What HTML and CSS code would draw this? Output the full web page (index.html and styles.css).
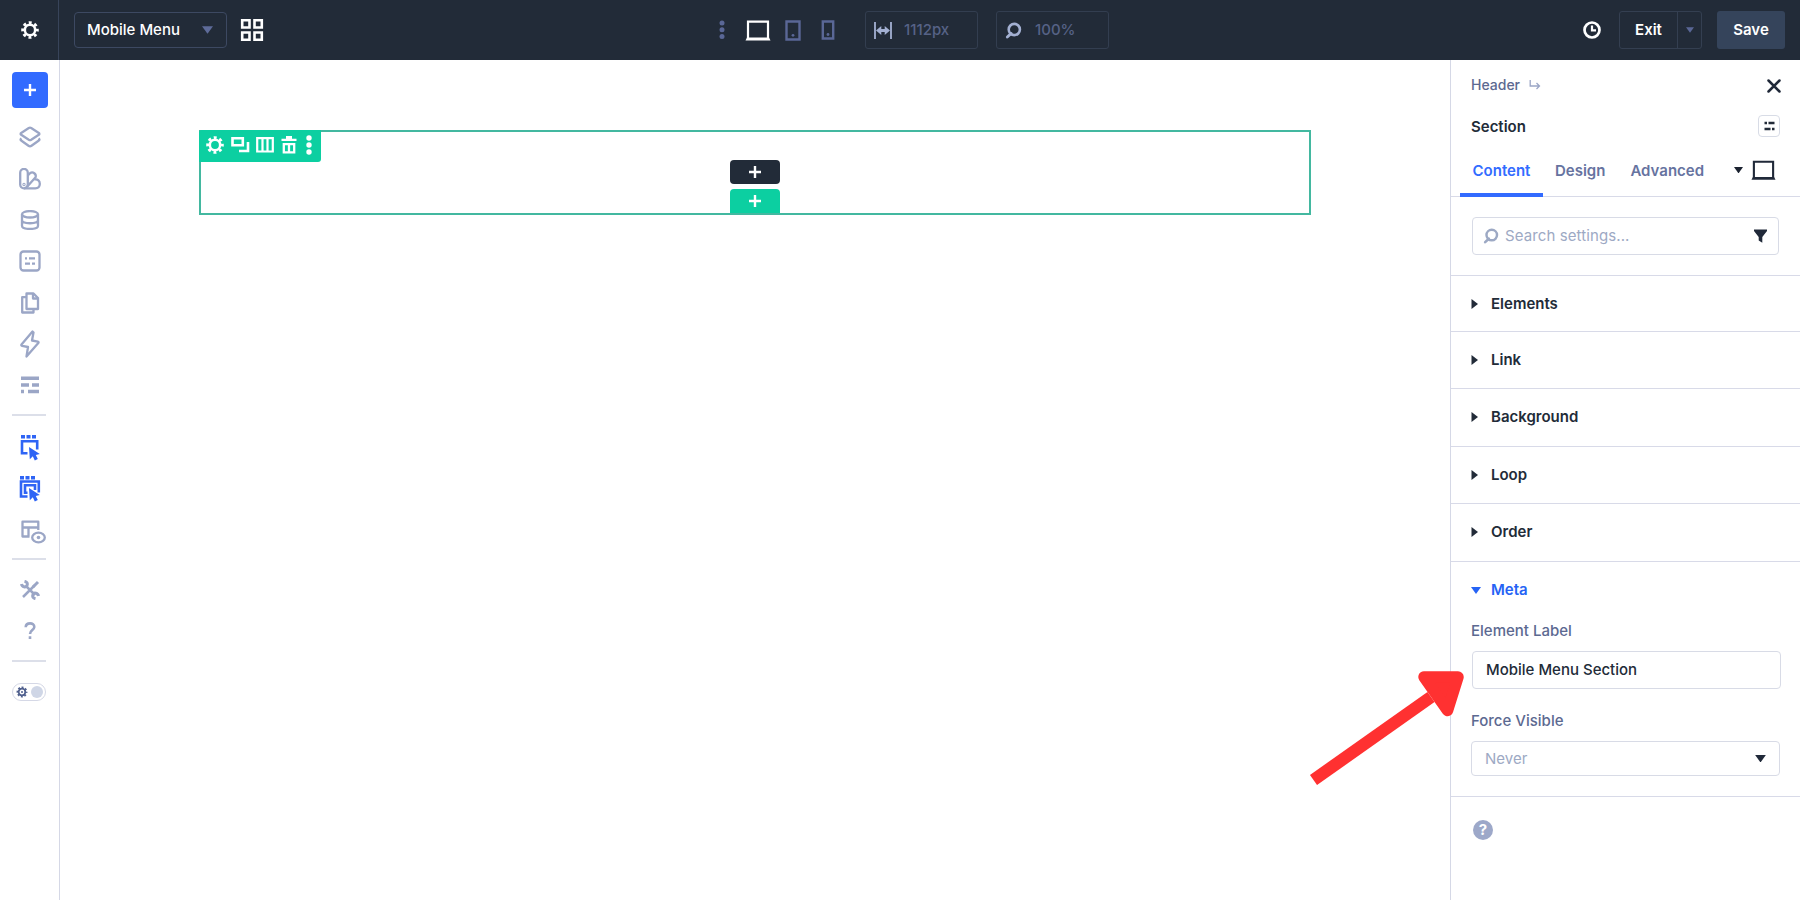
FILE: index.html
```html
<!DOCTYPE html>
<html lang="en">
<head>
<meta charset="utf-8">
<title>Mobile Menu</title>
<link rel="stylesheet" href="styles.css">
</head>
<body>
<svg class="defs" width="0" height="0">
  <symbol id="gear" viewBox="0 0 18 18"><circle cx="9" cy="9" r="5.200" fill="none" stroke="currentColor" stroke-width="2.600"/><circle cx="9" cy="9" r="7.300" fill="none" stroke="currentColor" stroke-width="3" stroke-dasharray="2.900 2.833" stroke-dashoffset="1.450"/></symbol>
  <symbol id="plus" viewBox="0 0 14 14"><path d="M7 1v12M1 7h12" fill="none" stroke="currentColor" stroke-width="2.400"/></symbol>
  <symbol id="laptop" viewBox="0 0 26 21"><path d="M3 18.500V1.700h20v16.800" fill="none" stroke="currentColor" stroke-width="2.200"/><path d="M2 17.500h22l1.500 3H.5z" fill="currentColor"/></symbol>
  <symbol id="lens" viewBox="0 0 17 17"><circle cx="9.300" cy="7.500" r="5.600" fill="none" stroke="currentColor" stroke-width="2.600"/><path d="M6.200 11.400 2.300 15" stroke="currentColor" stroke-width="2.800" stroke-linecap="round"/></symbol>
  <symbol id="down" viewBox="0 0 10 7"><path d="M0 0h10L5 7z" fill="currentColor"/></symbol>
  <symbol id="right" viewBox="0 0 7 10"><path d="M.5 0 7 5 .5 10z" fill="currentColor"/></symbol>
</svg>

<header class="topbar">
  <div class="topbar-gear"><svg width="18" height="18"><use href="#gear"/></svg></div>
  <div class="page-select"><span>Mobile Menu</span><svg width="11" height="8"><use href="#down"/></svg></div>
  <svg class="grid-icon" width="24" height="24" viewBox="0 0 24 24"><path d="M2.200 2.200h7.300v7.300H2.200zM14.500 2.200h7.300v7.300h-7.300zM2.200 14.500h7.300v7.300H2.200zM14.500 14.500h7.300v7.300h-7.300z" fill="none" stroke="currentColor" stroke-width="2.600"/></svg>
  <div class="devices">
    <svg width="6" height="20" viewBox="0 0 6 20"><circle cx="3" cy="3" r="2.500"/><circle cx="3" cy="9.700" r="2.500"/><circle cx="3" cy="16.400" r="2.500"/></svg>
    <svg class="device-active" width="26" height="21"><use href="#laptop"/></svg>
    <svg width="16" height="21" viewBox="0 0 16 21"><path d="M1.500 1.500h13v18h-13z" fill="none" stroke="currentColor" stroke-width="2.400"/><circle cx="8" cy="15.300" r="1.400"/></svg>
    <svg width="14" height="20" viewBox="0 0 14 20"><path d="M1.800 1.500h10.400v17H1.800z" fill="none" stroke="currentColor" stroke-width="2.400"/><circle cx="7" cy="14.500" r="1.400"/></svg>
  </div>
  <div class="top-field"><svg width="18" height="18" viewBox="0 0 18 18"><path d="M1 1v17M17 1v17" stroke="currentColor" stroke-width="1.800"/><path d="M2 9.500 7.300 5V8h3.400V5L16 9.500 10.700 14v-3H7.300v3z" fill="currentColor"/></svg><span>1112px</span></div>
  <div class="top-field zoom-field"><svg width="17" height="17"><use href="#lens"/></svg><span>100%</span></div>
  <div class="actions">
    <svg width="18" height="18" viewBox="0 0 18 18"><circle cx="9" cy="9" r="7.500" fill="none" stroke="currentColor" stroke-width="2.700"/><path d="M9 4.500V9.300h4" fill="none" stroke="currentColor" stroke-width="2.200"/></svg>
    <div class="exit"><span class="exit-label">Exit</span><span class="exit-more"><svg width="8" height="6"><use href="#down"/></svg></span></div>
    <div class="save">Save</div>
  </div>
</header>

<main class="workspace">
  <nav class="rail">
    <div class="add"><svg width="14" height="14"><use href="#plus"/></svg></div>
    <div class="rail-group group-main">
      <div class="rail-item"><svg width="22" height="22" viewBox="0 0 22 22"><path d="M9.800 2c.8-.5 1.600-.5 2.400 0l7.600 5c.8.600.8 1.200 0 1.800l-7.600 5c-.8.500-1.600.5-2.400 0l-7.600-5c-.8-.6-.8-1.200 0-1.800z"/><path d="M2.500 12.500c-1.300 1-1.300 1.400 0 2.300l7 5c1 .7 2 .7 3 0l7-5c1.300-.9 1.300-1.300 0-2.300"/></svg></div>
      <div class="rail-item"><svg width="22" height="22" viewBox="0 0 22 22"><path d="M1.200 4.700a3.800 3.800 0 0 1 7.600 0v11.800a3.800 3.800 0 0 1-7.600 0z"/><path d="M8.800 7.500 11.300 5c2.500-1.800 6.300 1 5.300 4.200L8.300 18.500"/><path d="M15.300 11.500c3.500-.8 5.600 1.500 5.500 4.500-.1 2.700-1.800 4.300-4.500 4.300H5"/><circle cx="5" cy="16.500" r=".5"/></svg></div>
      <div class="rail-item"><svg width="20" height="20" viewBox="0 0 20 20"><ellipse cx="10" cy="4.300" rx="8" ry="3.200"/><path d="M2 4.300v11.400c0 4.300 16 4.300 16 0V4.300M2 10c0 4.300 16 4.300 16 0"/></svg></div>
      <div class="rail-item"><svg width="22" height="22" viewBox="0 0 22 22"><rect x="1.500" y="1.500" width="19" height="19" rx="3"/><path d="M6 8.300h2M10 8.300h6M6 13.700h5M13 13.700h3"/></svg></div>
      <div class="rail-item"><svg width="20" height="22" viewBox="0 0 20 22"><path d="M6.500 1.500h7L18 6v11H6.500z"/><path d="M13 2v4.500h4.500M6 5.200H2.200v15.300h11.300V17"/></svg></div>
      <div class="rail-item"><svg width="20" height="28" viewBox="0 0 20 28"><path d="M12.500 1.500 1.500 14.500c-.4.700-.2 1.200.6 1.400L8 17 6.500 26.500 18.300 13c.5-.7.300-1.200-.5-1.400L12 10.500 13.500 2.500z"/></svg></div>
      <div class="rail-item"><svg class="bars" width="20" height="18" viewBox="0 0 20 18"><path d="M1 2.300h18M1 9h8M12 9h7M1 15.500h3M8 15.500h11"/></svg></div>
    </div>
    <div class="rail-group group-view">
      <div class="rail-item blue"><svg width="22" height="26" viewBox="0 0 22 26"><path class="solid" d="M2 0h4v3.500H2zM7.500 0h4v3.500h-4zM13 0h4v3.500h-4zM10 12l.8 12.300 3-3 2 4.200 3-1.500-2-4 4-1z"/><path class="thick" d="M8.500 18.300H3V6.200h15.200V14.500"/></svg></div>
      <div class="rail-item blue"><svg width="22" height="26" viewBox="0 0 22 26"><path class="solid" d="M1 0h4v3.500H1zM6.500 0h4v3.500h-4zM12 0h4v3.500h-4zM10 12l.8 12.300 3-3 2 4.200 3-1.500-2-4 4-1z"/><path class="thick" d="M8.500 20.500H2V5.500h17.800V16.500M8.500 16.800H6V9.300h10V14"/></svg></div>
      <div class="rail-item preview-item"><svg width="26" height="24" viewBox="0 0 26 24"><path d="M9.500 16.500h-7V1.700h15.800V10M2.500 7.500h15.800M8.500 7.500v9"/><ellipse cx="18.500" cy="17.500" rx="6.300" ry="4.900"/><circle class="solid" cx="18.500" cy="17.500" r="1.800"/></svg></div>
    </div>
    <div class="rail-group group-help">
      <div class="rail-item"><svg width="20" height="20" viewBox="0 0 20 20"><path class="tool" d="M5.500 5.500 15 15M14.500 5.500 3 17"/><path class="tool-head" d="M1.500 4c.5 3 4.500 4 5.500 1.500S6.500 1.800 4.500 1.300M18.500 16c-.5-3-4.500-4-5.500-1.500s.5 3.700 2.500 4.200M13 7l5-5"/></svg></div>
      <div class="rail-item"><svg width="12" height="18" viewBox="0 0 12 18"><path class="thick" d="M1.700 5.200C1.900 0 10.500.2 10.300 5c-.1 3-4.300 3.200-4.300 7M6 14.200v2.800"/></svg></div>
    </div>
    <div class="theme-switch"><svg width="12" height="12" viewBox="0 0 12 12"><circle cx="6" cy="6" r="3.300" fill="none" stroke="currentColor" stroke-width="1.800"/><circle cx="6" cy="6" r="4.500" fill="none" stroke="currentColor" stroke-width="1.900" stroke-dasharray="1.900 1.634" stroke-dashoffset=".950"/><circle cx="6" cy="6" r="1"/></svg><i></i></div>
  </nav>

  <section class="canvas">
    <div class="section-box">
      <div class="section-tools">
        <svg width="18" height="18"><use href="#gear"/></svg>
        <svg width="19" height="18" viewBox="0 0 19 18"><path d="M1.500 2.200h10.300v7H1.500zM17 6v9H8" fill="none" stroke="currentColor" stroke-width="2.600"/></svg>
        <svg width="18" height="18" viewBox="0 0 18 18"><path d="M1.200 2.200h15.600v13.300H1.200zM6.500 2v13.500M11.500 2v13.500" fill="none" stroke="currentColor" stroke-width="2.200"/></svg>
        <svg width="16" height="18" viewBox="0 0 16 18"><path d="M.5 3.800h15M2.800 8.200h10.400v8.200H2.800zM8 8v8" fill="none" stroke="currentColor" stroke-width="2.300"/><path d="M5 0h6v3H5z" fill="currentColor"/></svg>
        <svg width="6" height="20" viewBox="0 0 6 20"><g fill="currentColor"><circle cx="3" cy="3" r="2.700"/><circle cx="3" cy="10" r="2.700"/><circle cx="3" cy="17" r="2.700"/></g></svg>
      </div>
      <div class="inserts">
        <div class="insert insert-row"><svg width="14" height="14"><use href="#plus"/></svg></div>
        <div class="insert insert-section"><svg width="14" height="14"><use href="#plus"/></svg></div>
      </div>
    </div>
  </section>

  <aside class="panel">
    <div class="crumb"><span>Header</span><svg width="12" height="10" viewBox="0 0 12 10"><path d="M1.200 0v6h9M7.500 3l3 3-3 3" fill="none" stroke="currentColor" stroke-width="1.300"/></svg>
      <svg class="close" width="14" height="14" viewBox="0 0 14 14"><path d="M1.500 1.500l11 11M12.500 1.500l-11 11" stroke="currentColor" stroke-width="2.500" stroke-linecap="round"/></svg></div>
    <div class="panel-title"><span>Section</span><div class="presets"><svg width="11" height="10" viewBox="0 0 11 10"><path d="M.5 2h2.500M4.500 2h6M.5 8h6M8 8h2.500" stroke="currentColor" stroke-width="2.400"/></svg></div></div>
    <div class="tabs">
      <div class="tab tab-active">Content</div><div class="tab tab-design">Design</div><div class="tab tab-advanced">Advanced</div>
      <svg class="tab-caret" width="9" height="6.500"><use href="#down"/></svg>
      <svg class="tab-device" width="25" height="20.500"><use href="#laptop"/></svg>
    </div>
    <div class="search-row"><div class="search"><svg width="16" height="16"><use href="#lens"/></svg><span>Search settings...</span><svg class="funnel" width="13" height="14" viewBox="0 0 13 14"><path d="M0 .5h13v1.500L8.300 8v5.800L4.700 11.500V8L0 2z" fill="currentColor"/></svg></div></div>
    <div class="group"><svg width="7" height="10"><use href="#right"/></svg>Elements</div>
    <div class="group group-mid"><svg width="7" height="10"><use href="#right"/></svg>Link</div>
    <div class="group group-tall"><svg width="7" height="10"><use href="#right"/></svg>Background</div>
    <div class="group group-mid"><svg width="7" height="10"><use href="#right"/></svg>Loop</div>
    <div class="group group-tall"><svg width="7" height="10"><use href="#right"/></svg>Order</div>
    <div class="meta">
      <div class="meta-title"><svg width="10" height="7"><use href="#down"/></svg>Meta</div>
      <div class="label">Element Label</div>
      <div class="input">Mobile Menu Section</div>
      <div class="label label-visible">Force Visible</div>
      <div class="select"><span>Never</span><svg width="11" height="7.500"><use href="#down"/></svg></div>
    </div>
    <div class="help">?</div>
  </aside>
</main>
<svg class="arrow" width="160" height="122" viewBox="0 0 160 122"><path d="M5.500 110 123 27" stroke="currentColor" stroke-width="12.300"/><path d="M116 7h34l-10.500 33.500z" fill="currentColor" stroke="currentColor" stroke-width="11.500" stroke-linejoin="round"/></svg>
</body>
</html>
```

FILE: styles.css
```css
* { box-sizing: border-box; }
body { margin: 0; width: 1800px; height: 900px; overflow: hidden; background: #fff; color: #222b38; font: 500 15px/20px Inter, "Liberation Sans", sans-serif; }
svg { display: block; flex: none; }
.defs { position: absolute; }

.topbar { display: flex; align-items: center; height: 60px; background: #222b38; color: #fff; }
.topbar-gear { display: flex; align-items: center; justify-content: center; width: 59px; height: 60px; padding-left: 1px; border-right: 1px solid #38445a; }
.page-select { display: flex; align-items: center; justify-content: space-between; width: 153px; height: 36px; margin-left: 15px; padding: 0 13px 0 12px; border: 1px solid #3d4962; border-radius: 4px; }
.page-select svg { color: #5e6b99; }
.grid-icon { margin-left: 13px; }
.devices { display: flex; align-items: center; margin-left: 455px; color: #5a6796; fill: currentColor; }
.device-active { margin: 0 14px 0 20px; color: #fff; }
.devices svg:last-child { margin-left: 20px; }
.top-field { display: flex; align-items: center; width: 113px; height: 38px; margin-left: 30px; padding-left: 8px; border: 1px solid #333e50; border-radius: 3px; color: #a3b0d2; }
.top-field span { margin-left: 12px; color: #566286; }
.zoom-field { margin-left: 18px; padding-left: 8px; }
.zoom-field span { margin-left: 13px; }
.actions { display: flex; align-items: center; margin-left: auto; padding-right: 15px; font-weight: 600; }
.exit { display: flex; width: 83px; height: 38px; margin: 0 15px 0 18px; border: 1px solid #343f51; border-radius: 3px; }
.exit-label { display: flex; align-items: center; justify-content: center; width: 58px; border-right: 1px solid #343f51; }
.exit-more { display: flex; align-items: center; justify-content: center; flex: 1; color: #5a6796; }
.save { display: flex; align-items: center; justify-content: center; width: 68px; height: 38px; border-radius: 3px; background: #35445b; }

.workspace { display: grid; grid-template-columns: 60px 1fr 350px; height: 840px; }
.rail { border-right: 1px solid #d5d8e6; padding: 12px 0 0 12px; color: #9ba6c6; }
.add { display: flex; align-items: center; justify-content: center; width: 36px; height: 36px; border-radius: 4px; background: #326bff; color: #fff; }
.rail-group { width: 34px; border-bottom: 2px solid #dcdfe9; }
.rail-item { display: flex; align-items: center; justify-content: center; width: 36px; height: 41.300px; }
.rail-item svg { fill: none; stroke: currentColor; stroke-width: 2.300; stroke-linejoin: round; }
.rail-item .bars { stroke-width: 3.500; }
.rail-item .thick { stroke-width: 2.600; stroke-linejoin: miter; }
.rail-item .solid { fill: currentColor; stroke: none; }
.rail-item .tool { stroke-width: 2.500; }
.rail-item .tool-head { stroke-width: 3; }
.rail-item.blue { color: #2e64f5; }
.group-main { padding-top: 8.700px; height: 308px; }
.group-view { padding-top: 11px; height: 144px; }
.rail-item.preview-item { height: 45px; width: 42px; }
.group-help { padding-top: 9px; height: 102px; }
.theme-switch { display: flex; align-items: center; justify-content: space-between; width: 34px; height: 18px; margin-top: 21px; padding: 0 2px 0 3px; border: 1px solid #d5d8e6; border-radius: 9px; color: #50608e; fill: currentColor; }
.theme-switch i { width: 12px; height: 12px; border-radius: 50%; background: #cfd6e6; }

.canvas { padding: 70px 0 0 139px; }
.section-box { display: flex; width: 1112px; height: 85px; border: 2px solid #43b8a0; }
.section-tools { display: flex; align-items: center; gap: 6.700px; width: 122px; height: 32px; margin-left: -2px; margin-top: -2px; padding: 0 0 2px 7px; border-radius: 3px 0 3px 0; background: #0ccfa1; color: #fff; }
.section-tools svg:nth-child(5) { margin-left: 2px; }
.inserts { display: flex; flex-direction: column; gap: 5px; margin-left: 409px; padding-top: 28px; }
.insert { display: flex; align-items: center; justify-content: center; width: 50px; height: 25px; border-radius: 4px; color: #fff; background: #222b38; }
.insert-section { padding-top: 1px; border-radius: 4px 4px 0 0; background: #0ccfa1; }

.panel { border-left: 1px solid #d5d8e6; }
.crumb { display: flex; align-items: center; height: 50px; padding: 0 19px 0 20px; color: #5c6991; font-size: 14px; }
.crumb svg { margin-left: 9px; color: #9ba6c6; }
.crumb .close { margin-left: auto; margin-top: 2px; color: #202939; }
.panel-title { display: flex; align-items: center; justify-content: space-between; height: 34px; padding: 0 20px; font-weight: 600; }
.presets { display: flex; align-items: center; justify-content: center; width: 22px; height: 22px; margin-top: -2px; border: 1px solid #d8dce6; border-radius: 4px; }
.tabs { display: flex; align-items: center; height: 53px; padding-left: 9px; border-bottom: 1px solid #d8dae8; font-weight: 600; color: #6673a0; }
.tab { height: 53px; line-height: 53px; }
.tab-active { width: 83px; text-align: center; color: #326bff; border-bottom: 4px solid #326bff; }
.tab-design { margin-left: 12px; }
.tab-advanced { margin-left: 25px; }
.tab-caret { margin-left: 30px; color: #1b2230; }
.tab-device { margin-left: 8px; color: #202939; }
.search-row { height: 79px; padding: 20px 0 0 21px; border-bottom: 1px solid #d8dae8; }
.search { display: flex; align-items: center; width: 307px; height: 38px; padding: 0 11px 0 10px; border: 1px solid #d8dbe6; border-radius: 4px; color: #9da9c4; font-weight: 400; letter-spacing: .1px; }
.search span { margin-left: 6px; }
.funnel { margin-left: auto; color: #202939; }
.group { display: flex; align-items: center; gap: 13px; height: 56px; padding-left: 20px; border-bottom: 1px solid #d8dae8; font-weight: 600; }
.group-mid { height: 56.500px; }
.group-tall { height: 58.500px; }
.meta { height: 235px; padding: 17px 0 0 20px; border-bottom: 1px solid #d8dae8; }
.meta-title { display: flex; align-items: center; gap: 10px; height: 22px; color: #2563f5; font-weight: 600; }
.label { margin-top: 20px; height: 20px; color: #5c6991; }
.input { width: 309px; height: 38px; margin: 10px 0 0 1px; padding-left: 13px; line-height: 36px; border: 1px solid #d8dbe6; border-radius: 4px; }
.label-visible { margin-top: 22px; }
.select { display: flex; align-items: center; justify-content: space-between; width: 309px; height: 35px; margin-top: 10px; padding: 0 13px; border: 1px solid #d8dbe6; border-radius: 4px; color: #9da9c4; font-weight: 400; }
.select svg { color: #202939; }
.help { width: 20px; height: 20px; margin: 23px 0 0 22px; border-radius: 50%; background: #9da8c9; color: #fff; text-align: center; font-size: 15px; font-weight: 700; }
.arrow { position: absolute; left: 1308px; top: 670px; color: #ff3131; }
```
